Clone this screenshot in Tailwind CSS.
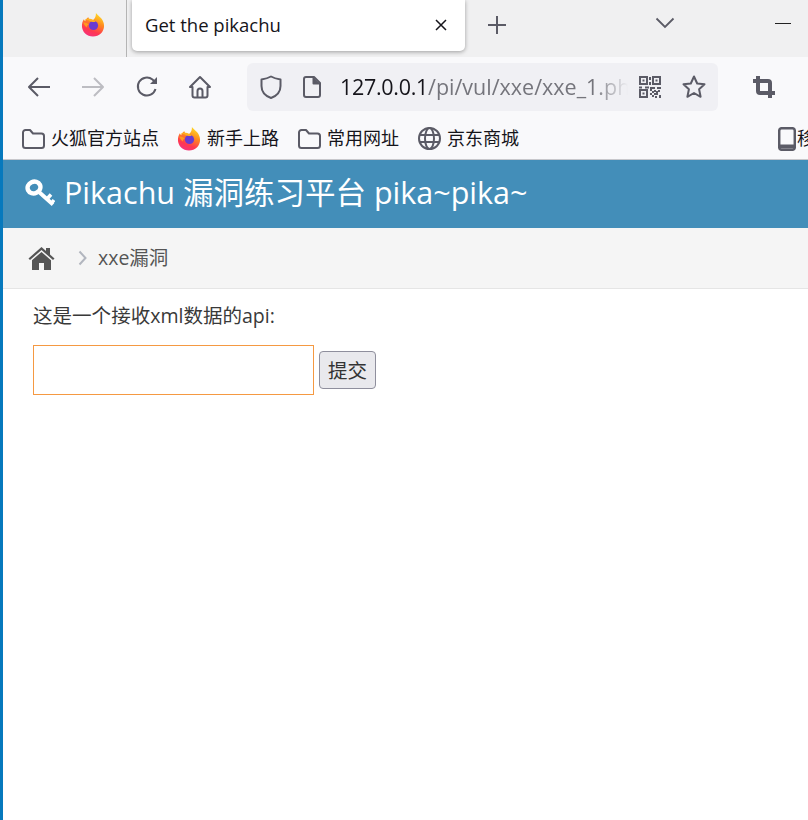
<!DOCTYPE html>
<html lang="zh-CN">
<head>
  <meta charset="UTF-8" />
  <meta name="viewport" content="width=device-width, initial-scale=1.0" />
  <title>Get the pikachu</title>
  <script src="https://cdn.jsdelivr.net/npm/@tailwindcss/browser@4"></script>
</head>
<body class="bg-white overflow-hidden font-['Open_Sans','Noto_Sans_CJK_SC',sans-serif]">
  <div class="w-[808px] h-[820px] flex overflow-hidden">
    <div class="w-[3px] shrink-0 bg-[#0679bd]"></div>
    <div class="w-[805px] flex flex-col">

      <!-- tab strip -->
      <div class="h-[57px] shrink-0 bg-[#f0f0f1] flex items-start text-[#5b5b66]">
        <div class="w-[124px] h-[57px] shrink-0 border-r border-[#b4b4b4] flex items-center pb-[8px] pl-[78px]">
          <svg width="24" height="25" viewBox="0 0 24 26">
            <defs>
              <linearGradient id="ffA" x1="0.7" y1="0" x2="0.3" y2="1">
                <stop offset="0" stop-color="#ffe226"/><stop offset="0.4" stop-color="#ff8a1f"/><stop offset="0.75" stop-color="#ff3750"/><stop offset="1" stop-color="#f5317f"/>
              </linearGradient>
            </defs>
            <path d="M15 1c2 2.500 3.500 3.500 5.500 5.500 2 2.500 3 5 3 8 0 6-5 11-11.500 11S0.500 20.500 0.500 14.500c0-3 .7-5 2-7 .3 1 .7 1.500 1.300 2 .8-2 2-3.500 3.500-4 0 1.500 1 2.500 3 3.500 3-1 5-3.500 4.700-8.500z" fill="url(#ffA)"/>
            <circle cx="12.500" cy="14" r="4.800" fill="#6a3bd0"/>
            <path d="M2.500 9c2-1 4.500-1 6.500 .5 2 1 4 .5 6 1-2-2.500-5-4-7.500-3.500C5.500 7 4 7.500 2.500 9z" fill="#ffb01f"/>
            <path d="M2 11c2 0 4 .5 5.500 2-1 .5-2 1.500-2 3-1.500-1-3-3-3.500-5z" fill="#ff9a1f"/>
          </svg>
        </div>
        <div class="ml-[5px] w-[333px] h-[51px] shrink-0 bg-white rounded-b-[5px] shadow-[0_1px_4px_rgba(0,0,0,0.35)] flex items-center justify-between pl-[13px] pr-[17px] pb-[2px]">
          <span class="text-[18.500px] text-[#15141a] font-['Open_Sans',sans-serif]">Get the pikachu</span>
          <svg width="14" height="14" viewBox="0 0 14 14" fill="none" stroke="#15141a" stroke-width="1.500"><path d="M2 2l10 10M12 2L2 12"/></svg>
        </div>
        <div class="ml-[22px] mt-[15px] w-[20px] flex justify-center">
          <svg width="20" height="20" viewBox="0 0 20 20" fill="none" stroke="#5b5b66" stroke-width="2"><path d="M10 1v18M1 10h18"/></svg>
        </div>
        <div class="ml-[148px] mt-[17px]">
          <svg width="20" height="12" viewBox="0 0 20 12" fill="none" stroke="#5b5b66" stroke-width="1.800"><path d="M1.500 1.500L10 10l8.500-8.500"/></svg>
        </div>
        <div class="ml-[100px] mt-[23px] w-[16px] h-px bg-[#222]"></div>
      </div>

      <!-- nav bar -->
      <div class="h-[63px] shrink-0 bg-[#f9f9fb] flex items-center pb-[3px] text-[#5b5b66]">
        <div class="w-[244px] shrink-0 flex items-center">
          <svg class="ml-[24px]" width="24" height="24" viewBox="0 0 24 24" fill="none" stroke="#5b5b66" stroke-width="2" stroke-linejoin="round"><path d="M23 12H2M11 3l-9 9 9 9"/></svg>
          <svg class="ml-[30px]" width="24" height="24" viewBox="0 0 24 24" fill="none" stroke="#bdbdc2" stroke-width="2" stroke-linejoin="round"><path d="M1 12h21M13 3l9 9-9 9"/></svg>
          <svg class="ml-[30px]" width="24" height="24" viewBox="0 0 24 24" fill="none" stroke="#5b5b66" stroke-width="2"><path d="M20.500 14a9 9 0 1 1-3-9.500l3 3"/><path d="M22 2v7h-7z" fill="#5b5b66" stroke="none"/></svg>
          <svg class="ml-[29px]" width="24" height="24" viewBox="0 0 24 24" fill="none" stroke="#5b5b66" stroke-width="2" stroke-linejoin="round"><path d="M12 2L2 12h2.500v8.500a2 2 0 0 0 2 2h11a2 2 0 0 0 2-2V12H22z"/><path d="M9.500 22.500V16a2.500 2.500 0 0 1 5 0v6.500"/></svg>
        </div>
        <div class="w-[471px] h-[48px] shrink-0 rounded-[6px] bg-[#f0f0f4] flex items-center">
          <svg class="ml-[13px] shrink-0" width="22" height="24" viewBox="0 0 22 24" fill="none" stroke="#5b5b66" stroke-width="2" stroke-linejoin="round"><path d="M11 1.500C7.500 3.500 4.500 4 1.500 4.500V11c0 6 4 10 9.500 12 5.500-2 9.500-6 9.500-12V4.500C17.500 4 14.500 3.500 11 1.500z"/></svg>
          <svg class="ml-[21px] shrink-0" width="18" height="22" viewBox="0 0 18 22" fill="none" stroke="#5b5b66" stroke-width="2" stroke-linejoin="round"><path d="M3 1h8l6 6v12a2 2 0 0 1-2 2H3a2 2 0 0 1-2-2V3a2 2 0 0 1 2-2z"/><path d="M10.500 1.500v6h6" fill="#5b5b66"/></svg>
          <div class="ml-[19px] w-[288px] shrink-0 overflow-hidden whitespace-nowrap text-[21.500px] text-[#75757c] [mask-image:linear-gradient(to_right,black_88%,transparent_100%)]"><span class="text-[#15141a] tracking-[-0.3px]">127.0.0.1</span><span>/pi/vul/xxe/xxe_1.php</span></div>
          <svg class="ml-[11px] shrink-0" width="22" height="22" viewBox="0 0 22 22" fill="#5b5b66">
            <path fill-rule="evenodd" d="M0 0h9v9H0zM2 2v5h5V2zM13 0h9v9h-9zM15 2v5h5V2zM0 13h9v9H0zM2 15v5h5v-5z"/>
            <path d="M3.500 3.500h2v2h-2zM16.500 3.500h2v2h-2zM3.500 16.500h2v2h-2zM10 1h2v3h-2zM10 6h2v3h-2zM13 11h3v2h-3zM18 11h4v2h-4zM0 10.500h3v2H0zM6 10.500h4v2H6zM11 13h2v2h-2zM15 14h2v2h-2zM19 14h2v2h-2zM11 17h2v2h-2zM13 19h2v2h-2zM17 17h2v2h-2zM20 19h2v3h-2zM16 20h2v2h-2zM13 15h2v2h-2zM17 15h2v2h-2zM15 17h2v2h-2zM11 11h2v2h-2z"/>
          </svg>
          <svg class="ml-[21px] shrink-0" width="24" height="24" viewBox="0 0 24 24" fill="none" stroke="#5b5b66" stroke-width="2" stroke-linejoin="round"><path d="M12 1.500l3.200 7 7.300.8-5.400 5 1.500 7.500-6.600-3.800-6.600 3.800 1.500-7.500-5.400-5 7.300-.8z"/></svg>
        </div>
        <svg class="ml-[35px] shrink-0" width="22" height="22" viewBox="0 0 22 22" fill="none" stroke="#5b5b66" stroke-width="4"><path d="M0 5h15a2 2 0 0 1 2 2v15M5 0v15a2 2 0 0 0 2 2h15"/></svg>
      </div>

      <!-- bookmarks bar -->
      <div class="h-[40px] shrink-0 bg-[#f9f9fb] border-b border-[#c8c8cc] flex items-center pb-[2px] text-[18px] text-[#15141a] whitespace-nowrap overflow-hidden">
        <svg class="ml-[19px] shrink-0" width="23" height="20" viewBox="0 0 23 20" fill="none" stroke="#5b5b66" stroke-width="2" stroke-linejoin="round"><path d="M1 3.500A2.500 2.500 0 0 1 3.500 1H8l3 3.500h8.500A2.500 2.500 0 0 1 22 7v9.500a2.500 2.500 0 0 1-2.500 2.500h-16A2.500 2.500 0 0 1 1 16.500z"/></svg>
        <span class="ml-[6px]">火狐官方站点</span>
        <svg class="ml-[18px] shrink-0" width="24" height="25" viewBox="0 0 24 26">
          <defs>
            <linearGradient id="ffB" x1="0.7" y1="0" x2="0.3" y2="1">
              <stop offset="0" stop-color="#ffe226"/><stop offset="0.4" stop-color="#ff8a1f"/><stop offset="0.75" stop-color="#ff3750"/><stop offset="1" stop-color="#f5317f"/>
            </linearGradient>
          </defs>
          <path d="M15 1c2 2.500 3.500 3.500 5.500 5.500 2 2.500 3 5 3 8 0 6-5 11-11.500 11S0.500 20.500 0.500 14.500c0-3 .7-5 2-7 .3 1 .7 1.500 1.300 2 .8-2 2-3.500 3.500-4 0 1.500 1 2.500 3 3.500 3-1 5-3.500 4.700-8.500z" fill="url(#ffB)"/>
          <circle cx="12.500" cy="14" r="4.800" fill="#6a3bd0"/>
          <path d="M2.500 9c2-1 4.500-1 6.500 .5 2 1 4 .5 6 1-2-2.500-5-4-7.500-3.500C5.500 7 4 7.500 2.500 9z" fill="#ffb01f"/>
          <path d="M2 11c2 0 4 .5 5.500 2-1 .5-2 1.500-2 3-1.500-1-3-3-3.500-5z" fill="#ff9a1f"/>
        </svg>
        <span class="ml-[6px]">新手上路</span>
        <svg class="ml-[19px] shrink-0" width="23" height="20" viewBox="0 0 23 20" fill="none" stroke="#5b5b66" stroke-width="2" stroke-linejoin="round"><path d="M1 3.500A2.500 2.500 0 0 1 3.500 1H8l3 3.500h8.500A2.500 2.500 0 0 1 22 7v9.500a2.500 2.500 0 0 1-2.500 2.500h-16A2.500 2.500 0 0 1 1 16.500z"/></svg>
        <span class="ml-[6px]">常用网址</span>
        <svg class="ml-[19px] shrink-0" width="23" height="23" viewBox="0 0 23 23" fill="none" stroke="#5b5b66" stroke-width="2"><circle cx="11.500" cy="11.500" r="10.500"/><ellipse cx="11.500" cy="11.500" rx="4.500" ry="10.500"/><path d="M1 8h21M1 15h21"/></svg>
        <span class="ml-[6px]">京东商城</span>
        <svg class="ml-[259px] shrink-0" width="18" height="24" viewBox="0 0 18 24" fill="none" stroke="#5b5b66" stroke-width="2.500"><rect x="1.200" y="1.200" width="15.600" height="21.600" rx="2.500"/><path d="M1.500 19.500h15" stroke-width="4"/></svg>
        <span class="ml-[1px]">移</span>
      </div>

      <!-- page header -->
      <div class="h-[68px] shrink-0 bg-[#438eb9] flex items-center pl-[22px] pb-[3px] text-white">
        <svg width="30" height="28" viewBox="0 0 30 28" fill="none" stroke="#fff"><ellipse cx="9" cy="8.500" rx="6.500" ry="5.800" stroke-width="4.500" transform="rotate(-25 9 8.500)"/><path d="M14 13l14 12.500" stroke-width="3.800"/><path d="M22 20l4-4.500M26.500 24l2.500-3" stroke-width="3.500"/></svg>
        <span class="ml-[9px] text-[30.500px] whitespace-nowrap">Pikachu 漏洞练习平台 pika~pika~</span>
      </div>

      <!-- breadcrumb -->
      <div class="h-[61px] shrink-0 bg-[#f5f5f5] border-b border-[#e5e5e5] flex items-center pl-[25px] text-[19.500px] text-[#555]">
        <svg width="27" height="23" viewBox="0 0 27 23" fill="#555"><path d="M13.500 0L0.500 11.500 2 13l11.500-10L25 13l1.500-1.500L22 7.500V1h-4v3z"/><path d="M13.500 5L4 13.200V23h7v-7h5v7h7v-9.800z"/></svg>
        <svg class="ml-[23px]" width="9" height="16" viewBox="0 0 9 16" fill="none" stroke="#b2b6bf" stroke-width="2"><path d="M1.500 1.500l6 6.500-6 6.500"/></svg>
        <span class="ml-[11px]">xxe漏洞</span>
      </div>

      <!-- page content -->
      <div class="pl-[30px] pt-[14px] text-[#393939]">
        <p class="text-[19.550px] leading-[26px]">这是一个接收xml数据的api:</p>
        <div class="mt-[16px] flex items-center">
          <input type="text" class="w-[281px] h-[50px] border border-[#f59942] bg-white outline-none" />
          <button class="ml-[5px] w-[57px] h-[38px] rounded-[4px] border border-[#8f8f9d] bg-[#e9e9ed] pt-[2px] text-[19.500px] text-[#333]">提交</button>
        </div>
      </div>

    </div>
  </div>
</body>
</html>
